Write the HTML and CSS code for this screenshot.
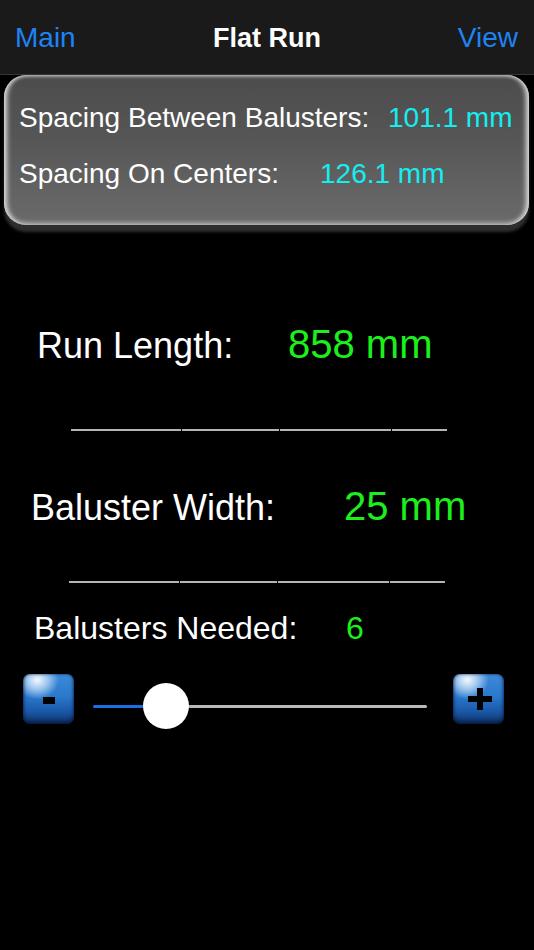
FILE: index.html
```html
<!DOCTYPE html>
<html>
<head>
<meta charset="utf-8">
<link rel="stylesheet" href="styles.css">
</head>
<body>
<div class="screen">
  <header class="nav">
    <span class="nav-btn left">Main</span>
    <span class="nav-title">Flat Run</span>
    <span class="nav-btn right">View</span>
  </header>

  <section class="card">
    <div class="card-row">
      <span class="card-label lbl-a">Spacing Between Balusters:</span>
      <span class="card-value">101.1 mm</span>
    </div>
    <div class="card-row">
      <span class="card-label lbl-b">Spacing On Centers:</span>
      <span class="card-value">126.1 mm</span>
    </div>
  </section>

  <div class="field run">
    <span class="field-label run-label">Run Length:</span>
    <span class="field-value">858 mm</span>
  </div>
  <div class="rule rule-1"><i class="s1"></i><i class="s2"></i><i class="s3"></i><i class="s4"></i></div>

  <div class="field width">
    <span class="field-label width-label">Baluster Width:</span>
    <span class="field-value">25 mm</span>
  </div>
  <div class="rule rule-2"><i class="s1"></i><i class="s2"></i><i class="s3"></i><i class="s4"></i></div>

  <div class="needed">
    <span class="needed-label">Balusters Needed:</span>
    <span class="needed-value">6</span>
  </div>

  <div class="stepper">
    <div class="glossy minus">
      <svg width="51" height="50" viewBox="0 0 51 50"><rect x="20" y="23" width="12" height="7" fill="#000"/></svg>
    </div>
    <div class="slider">
      <div class="track-min"></div>
      <div class="thumb"></div>
      <div class="track-max"></div>
    </div>
    <div class="glossy plus">
      <svg width="51" height="50" viewBox="0 0 51 50"><rect x="15" y="22" width="24" height="6" fill="#000"/><rect x="24" y="14" width="6" height="22" fill="#000"/></svg>
    </div>
  </div>
</div>
</body>
</html>
```

FILE: styles.css
```css
* { box-sizing: border-box; }
html, body {
  margin: 0;
  padding: 0;
  background: #000;
}
body {
  font-family: "Liberation Sans", Arial, Helvetica, sans-serif;
  color: #fff;
  width: 534px;
  height: 950px;
  overflow: hidden;
}
.screen {
  display: flex;
  flex-direction: column;
}

/* nav bar */
.nav {
  height: 75px;
  background: #1a1a1a;
  border-bottom: 1px solid #353535;
  display: grid;
  grid-template-columns: 1fr auto 1fr;
  align-items: center;
  padding: 2px 15px 0 15px;
  font-size: 28px;
  line-height: 28px;
}
.nav-btn { color: #1d84f5; }
.nav-btn.right { justify-self: end; padding-right: 1px; }
.nav-title {
  font-weight: bold;
  font-size: 27px;
  color: #fff;
}

/* bevelled card */
.card {
  margin: 0 5px 0 4px;
  height: 150px;
  border-radius: 22px;
  background: linear-gradient(to bottom, #4c4c4c 0%, #555 40%, #646464 80%, #6a6a6a 100%);
  box-shadow:
    inset 6px 0 5px -3px #dcdcdc,
    inset -6px 0 5px -3px #dcdcdc,
    inset 0 3px 3px -1px #a0a0a0,
    inset 0 -5px 5px -3px #b8b8b8,
    0 7px 3px #2e2e2e;
  padding: 29px 0 0 15px;
  display: flex;
  flex-direction: column;
  gap: 28px;
  font-size: 28px;
  line-height: 28px;
}
.card-row { display: flex; }
.card-label { color: #fff; }
.lbl-a { width: 369px; }
.lbl-b { width: 301px; }
.card-value { color: #14eef0; }

/* fields */
.field {
  display: flex;
  align-items: baseline;
  line-height: 40px;
}
.field-label { font-size: 36px; }
.field-value { font-size: 40px; color: #1cf01c; }
.run { margin-top: 99px; padding-left: 37px; }
.run-label { width: 251px; }
.width { margin-top: 55px; padding-left: 31px; }
.width-label { width: 313px; }

.rule {
  display: flex;
  gap: 1px;
  height: 2px;
}
.rule i {
  display: block;
  height: 2px;
  background: #b4b4b4;
}
.rule .s1 { width: 110px; }
.rule .s2 { width: 97px; }
.rule .s3 { width: 111px; }
.rule .s4 { width: 55px; }
.rule-1 { margin-top: 63px; padding-left: 71px; }
.rule-2 { margin-top: 53px; padding-left: 69px; }

.needed {
  margin-top: 27px;
  padding-left: 34px;
  display: flex;
  align-items: baseline;
  font-size: 32px;
  line-height: 36px;
}
.needed-label { width: 312px; }
.needed-value { color: #1cf01c; }

/* stepper */
.stepper {
  margin-top: 28px;
  height: 50px;
  display: flex;
  align-items: flex-start;
  padding-left: 23px;
}
.glossy {
  width: 51px;
  height: 50px;
  border-radius: 7px;
  background:
    radial-gradient(ellipse 60% 55% at 28% 12%, rgba(255,255,255,0.95) 0%, rgba(200,225,250,0.7) 35%, rgba(120,180,240,0) 70%),
    linear-gradient(to bottom, #3d8ad8 0%, #2a78cc 45%, #1a58a8 75%, #0f3468 100%);
  box-shadow: inset 0 0 3px rgba(0,20,60,0.8), inset 0 -3px 4px rgba(5,20,50,0.6);
}
.glossy svg { display: block; }
.slider {
  margin-left: 19px;
  margin-top: 9px;
  width: 334px;
  height: 46px;
  display: flex;
  align-items: center;
}
.track-min {
  width: 51px;
  height: 3px;
  background: #1b6fe6;
  border-radius: 2px 0 0 2px;
}
.thumb {
  width: 46px;
  height: 46px;
  border-radius: 50%;
  background: #fff;
  margin: 0 -1px;
  position: relative;
  z-index: 1;
  box-shadow: 0 1px 2px rgba(0,0,0,0.3);
}
.track-max {
  flex: 1;
  height: 3px;
  background: #b9b9b9;
  border-radius: 0 2px 2px 0;
}
.plus { margin-left: 26px; }
```
